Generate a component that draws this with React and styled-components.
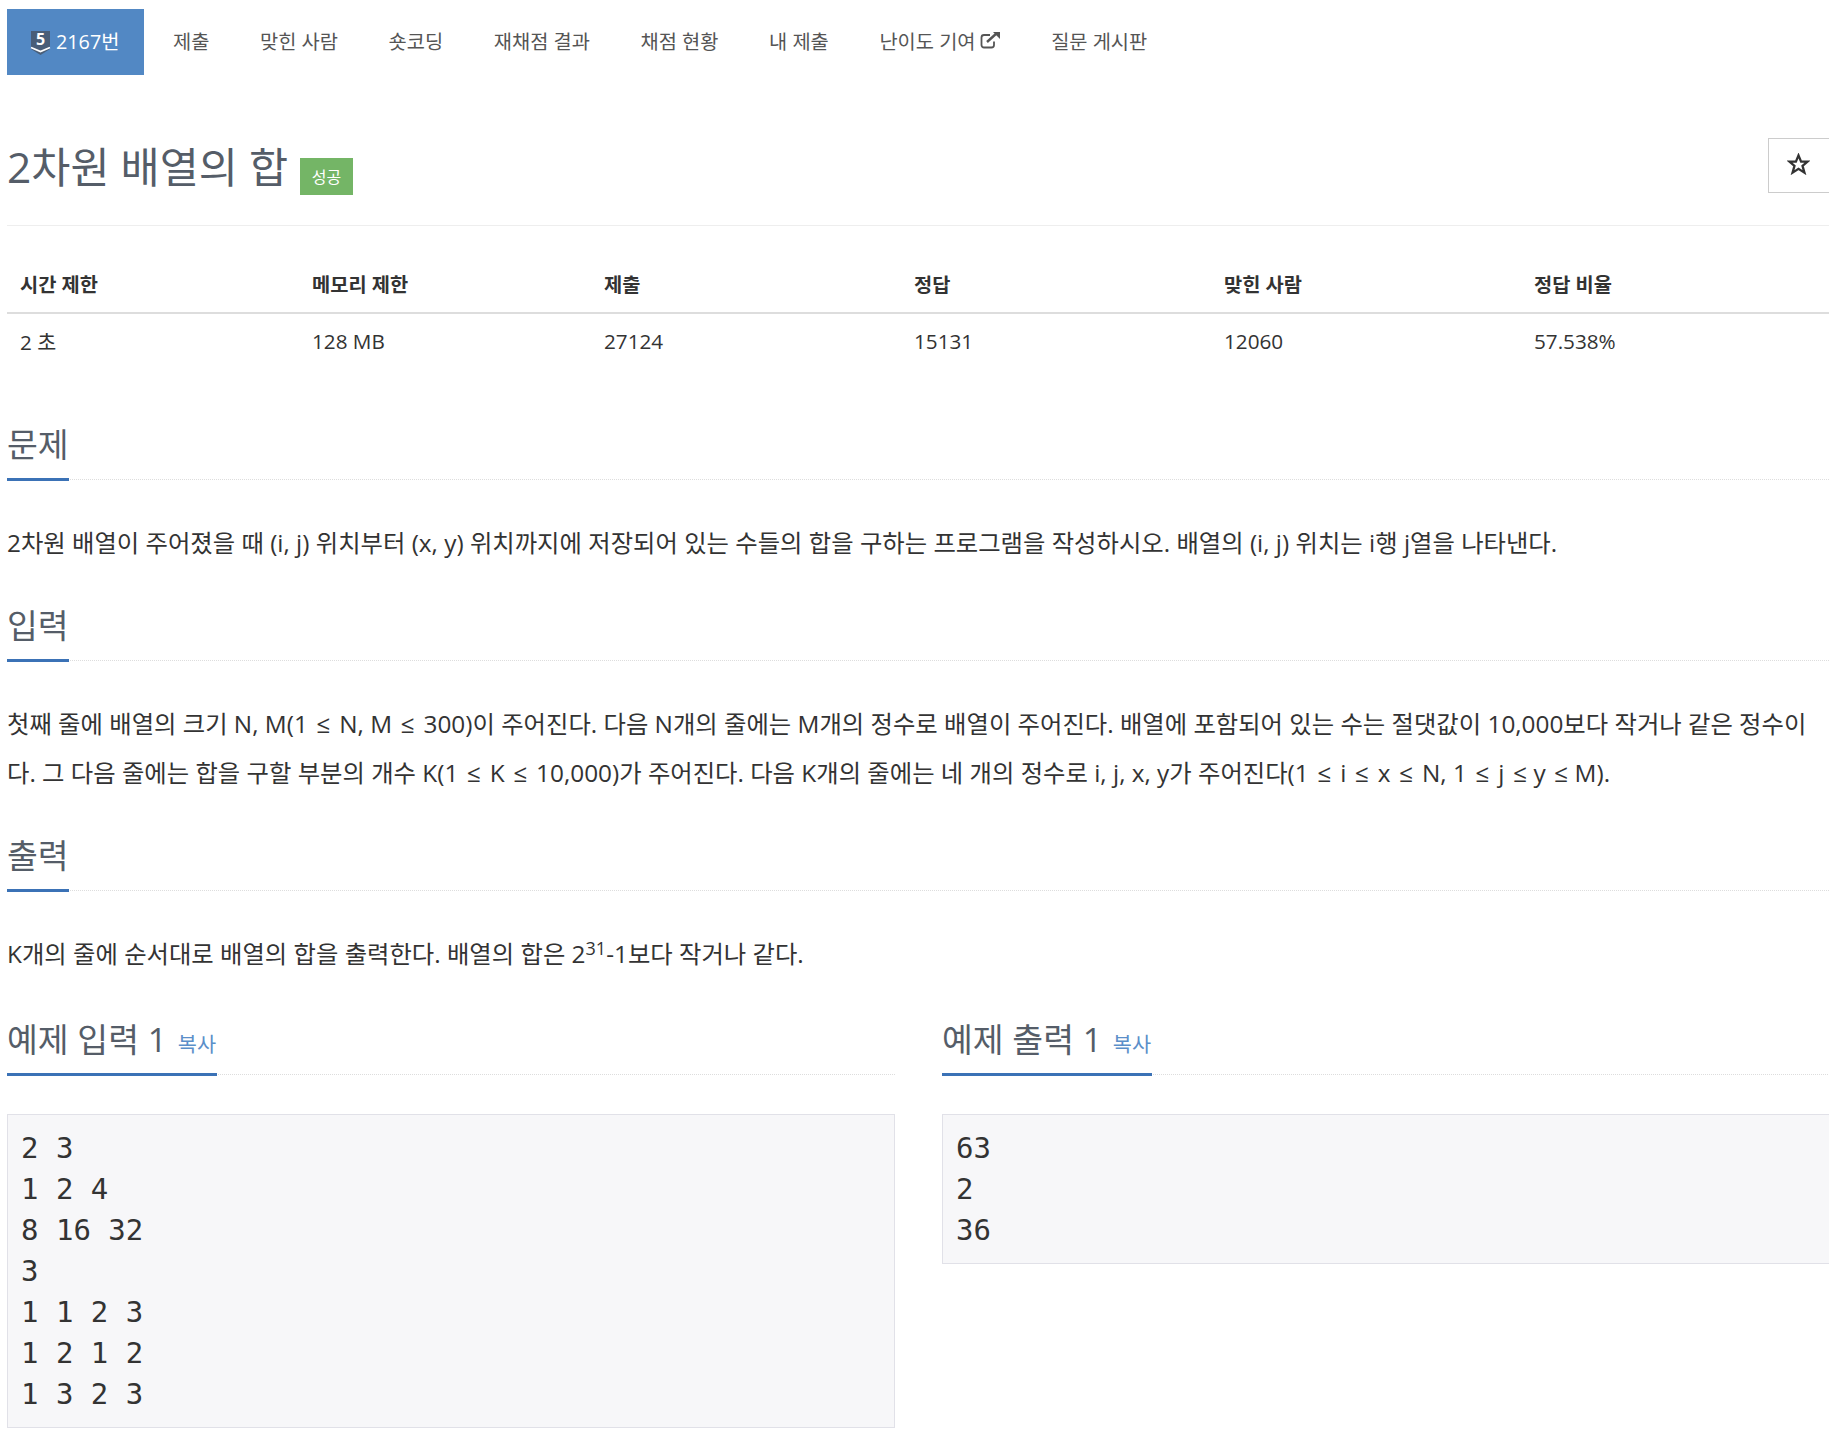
import React from "react";
import styled, { createGlobalStyle } from "styled-components";

const GlobalStyle = createGlobalStyle`
  html, body {
    margin: 0;
    padding: 0;
    background: #fff;
    overflow-x: hidden;
  }
  body {
    font-family: "Open Sans", "Noto Sans CJK KR", sans-serif;
    color: #333;
  }
  * {
    box-sizing: border-box;
  }
`;

const Page = styled.div`
  width: 1829px;
  padding: 9px 0 10px 7px;
  overflow: hidden;
`;

const Nav = styled.nav`
  display: flex;
  height: 66px;
  gap: 0.6px;
`;
const Tab = styled.a`
  display: flex;
  align-items: center;
  gap: ${(p) => (p.$active ? "6px" : "4px")};
  padding: ${(p) => (p.$active ? "0 25px 4px 24px" : "0 25px 4px")};
  margin-right: ${(p) => (p.$active ? "3px" : "0")};
  font-size: 19.8px;
  color: ${(p) => (p.$active ? "#fff" : "#555")};
  background: ${(p) => (p.$active ? "#5288c4" : "transparent")};
`;
const TierSvg = styled.svg`
  margin-top: 6px;
  overflow: visible;
`;

const TitleRow = styled.div`
  display: flex;
  justify-content: space-between;
  align-items: flex-start;
  height: 151px;
  padding-top: 64px;
  border-bottom: 1px solid #eee;
`;
const TitleLeft = styled.div`
  display: flex;
  align-items: center;
  gap: 12px;
`;
const Title = styled.h1`
  margin: 0;
  font-size: 42.5px;
  font-weight: 400;
  line-height: 56px;
  color: #555d68;
`;
const Badge = styled.span`
  display: flex;
  align-items: center;
  justify-content: center;
  width: 53px;
  height: 37px;
  margin-top: 18px;
  background: #74b566;
  color: #fff;
  font-size: 16px;
`;
const StarButton = styled.button`
  display: flex;
  align-items: center;
  justify-content: center;
  width: 61px;
  height: 55px;
  margin-top: -1px;
  border: 1px solid #ccc;
  border-right: 0;
  background: #fff;
  padding: 0 2px 4px 0;
  color: #333;
`;

const InfoTable = styled.table`
  width: 1822px;
  margin-top: 35px;
  border-collapse: collapse;
  table-layout: fixed;
`;
const Th = styled.th`
  width: ${(p) => p.$w}px;
  height: 52px;
  padding: 0 13px 6px;
  text-align: left;
  font-size: 19.8px;
  font-weight: 700;
  color: #333;
  border-bottom: 2px solid #ddd;
`;
const Td = styled.td`
  height: 55px;
  padding: 0 13px 1px;
  font-size: 20.7px;
  color: #333;
`;

const Section = styled.section`
  margin-top: ${(p) => p.$top}px;
`;
const Headline = styled.div`
  border-bottom: 1px dotted #ddd;
  height: 60px;
`;
const HeadlineText = styled.h2`
  display: inline-flex;
  align-items: baseline;
  gap: 11px;
  height: 61px;
  margin: 0;
  font-size: 33.5px;
  line-height: 48px;
  font-weight: 400;
  color: #555d68;
  border-bottom: 3px solid #3b72b6;
`;
const CopyLink = styled.a`
  font-size: 20.8px;
  padding-right: 1px;
  color: #5b8fc9;
`;
const Body = styled.p`
  margin: 38px 0 0;
  font-size: 24.35px;
  line-height: 49px;
  color: #333;
`;
const Sup = styled.sup`
  font-size: 18px;
  line-height: 0;
  vertical-align: 8px;
`;

const SampleGrid = styled.div`
  display: grid;
  grid-template-columns: 888px 888px;
  column-gap: 47px;
  margin-top: 37px;
  align-items: start;
`;
const SamplePre = styled.pre`
  margin: 39px 0 0;
  padding: 13px 13px 12px;
  background: #f7f7f9;
  border: 1px solid #e1e1e8;
  font-family: "DejaVu Sans Mono", monospace;
  font-size: 29px;
  line-height: 41px;
  color: #333;
`;

const TierIcon = () => (
  <TierSvg width="19" height="24" viewBox="0 0 19 24">
    <path d="M0 0H19V18L9.5 24L0 18Z" fill="#495e78" />
    <path d="M0 16.5L9.5 20.5L19 16.5" fill="none" stroke="#fff" strokeWidth="1.8" />
    <text x="9.5" y="14" textAnchor="middle" fontSize="16" fontWeight="700" fill="#fff" fontFamily="Open Sans, sans-serif">
      5
    </text>
  </TierSvg>
);

const ExternalIcon = () => (
  <svg width="21" height="18" viewBox="0 0 21 18" fill="none" stroke="#555">
    <path d="M14 10.5V14a2.5 2.5 0 0 1-2.5 2.5H4A2.5 2.5 0 0 1 1.5 14V6.5A2.5 2.5 0 0 1 4 4h6" strokeWidth="1.8" />
    <path d="M7 11L17 2" strokeWidth="2.4" />
    <path d="M13 1H20V8Z" fill="#555" stroke="none" />
  </svg>
);

const StarIcon = () => (
  <svg width="23" height="22" viewBox="0 0 24 23" fill="none" stroke="#333" strokeWidth="2.4" strokeLinejoin="miter">
    <path d="M12 2.5L14.7 9H21.5L16.2 13.5L18.2 20.5L12 16.5L5.8 20.5L7.8 13.5L2.5 9H9.3Z" />
  </svg>
);

const tabs = ["제출", "맞힌 사람", "숏코딩", "재채점 결과", "채점 현황", "내 제출"];
const columns = [
  ["시간 제한", "2 초", 292],
  ["메모리 제한", "128 MB", 292],
  ["제출", "27124", 310],
  ["정답", "15131", 310],
  ["맞힌 사람", "12060", 310],
  ["정답 비율", "57.538%", 308],
];

const inputText =
  "첫째 줄에 배열의 크기 N, M(1 \u200A≤\u200A N, M \u200A≤\u200A 300)이 주어진다. 다음 N개의 줄에는 M개의 정수로 배열이 주어진다. 배열에 포함되어 있는 수는 절댓값이 10,000보다 작거나 같은 정수이다. 그 다음 줄에는 합을 구할 부분의 개수 K(1 \u200A≤\u200A K \u200A≤\u200A 10,000)가 주어진다. 다음 K개의 줄에는 네 개의 정수로 i, j, x, y가 주어진다(1 \u200A≤\u200A i \u200A≤\u200A x \u200A≤\u200A N, 1 \u200A≤\u200A j \u200A≤ y \u200A≤ M).";

const sampleIn = `2 3
1 2 4
8 16 32
3
1 1 2 3
1 2 1 2
1 3 2 3`;
const sampleOut = `63
2
36`;

export default function App() {
  return (
    <Page>
      <GlobalStyle />
      <Nav>
        <Tab $active>
          <TierIcon />
          2167번
        </Tab>
        {tabs.map((t) => (
          <Tab key={t}>{t}</Tab>
        ))}
        <Tab>
          난이도 기여
          <ExternalIcon />
        </Tab>
        <Tab>질문 게시판</Tab>
      </Nav>

      <TitleRow>
        <TitleLeft>
          <Title>2차원 배열의 합</Title>
          <Badge>성공</Badge>
        </TitleLeft>
        <StarButton aria-label="star">
          <StarIcon />
        </StarButton>
      </TitleRow>

      <InfoTable>
        <thead>
          <tr>
            {columns.map(([h, , w]) => (
              <Th key={h} $w={w}>
                {h}
              </Th>
            ))}
          </tr>
        </thead>
        <tbody>
          <tr>
            {columns.map(([h, v]) => (
              <Td key={h}>{v}</Td>
            ))}
          </tr>
        </tbody>
      </InfoTable>

      <Section $top={52}>
        <Headline>
          <HeadlineText>문제</HeadlineText>
        </Headline>
        <Body>
          2차원 배열이 주어졌을 때 (i, j) 위치부터 (x, y) 위치까지에 저장되어 있는 수들의 합을 구하는 프로그램을 작성하시오. 배열의 (i, j) 위치는 i행 j열을 나타낸다.
        </Body>
      </Section>

      <Section $top={34}>
        <Headline>
          <HeadlineText>입력</HeadlineText>
        </Headline>
        <Body>{inputText}</Body>
      </Section>

      <Section $top={34}>
        <Headline>
          <HeadlineText>출력</HeadlineText>
        </Headline>
        <Body>
          K개의 줄에 순서대로 배열의 합을 출력한다. 배열의 합은 2<Sup>31</Sup>-1보다 작거나 같다.
        </Body>
      </Section>

      <SampleGrid>
        <div>
          <Headline>
            <HeadlineText>
              예제 입력 1<CopyLink>복사</CopyLink>
            </HeadlineText>
          </Headline>
          <SamplePre>{sampleIn}</SamplePre>
        </div>
        <div>
          <Headline>
            <HeadlineText>
              예제 출력 1<CopyLink>복사</CopyLink>
            </HeadlineText>
          </Headline>
          <SamplePre>{sampleOut}</SamplePre>
        </div>
      </SampleGrid>
    </Page>
  );
}
